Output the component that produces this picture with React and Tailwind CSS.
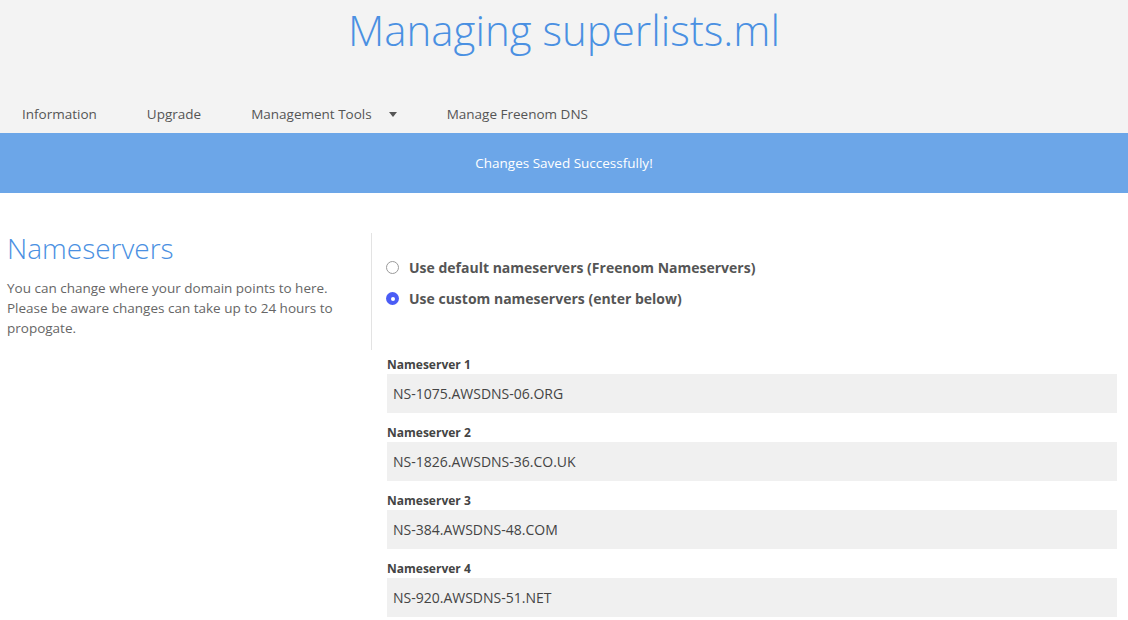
import React from 'react';

const servers = [
  "NS-1075.AWSDNS-06.ORG",
  "NS-1826.AWSDNS-36.CO.UK",
  "NS-384.AWSDNS-48.COM",
  "NS-920.AWSDNS-51.NET",
];

function Radio({ checked, label }) {
  return (
    <label className="flex items-center gap-[10px] h-[31px]">
      {checked ? (
        <span className="w-[13px] h-[13px] rounded-full bg-[#4a5cf5] flex items-center justify-center">
          <span className="w-[4px] h-[4px] rounded-full bg-white" />
        </span>
      ) : (
        <span className="w-[13px] h-[13px] rounded-full border border-[#9a9a9a] bg-white" />
      )}
      <span className="text-[14px] font-bold text-[#555]">{label}</span>
    </label>
  );
}

export default function App() {
  return (
    <div className="w-full min-h-screen bg-white font-['Open_Sans',sans-serif] overflow-hidden">
      {/* Header */}
      <div className="bg-[#f3f3f3]">
        <h1 className="text-center text-[42px] font-light text-[#4a90e2] leading-none pt-[9px] h-[94px]">
          Managing superlists.ml
        </h1>
        <nav className="flex items-center h-[39px] pt-[2px] text-[13.5px] text-[#555] pl-[22px]">
          <span>Information</span>
          <span className="ml-[50px]">Upgrade</span>
          <span className="ml-[50px] flex items-center">
            Management Tools
            <svg width="8" height="5" viewBox="0 0 8 5" className="ml-[17px]">
              <path d="M0 0h8L4 5z" fill="#555" />
            </svg>
          </span>
          <span className="ml-[50px]">Manage Freenom DNS</span>
        </nav>
      </div>

      {/* Banner */}
      <div className="bg-[#6ca6e8] h-[60px] flex items-center justify-center text-white text-[13.5px]">
        Changes Saved Successfully!
      </div>

      {/* Content */}
      <div className="flex pt-[40px]">
        <div className="w-[371px] shrink-0 pl-[7px] pr-[30px]">
          <h2 className="text-[28px] font-light text-[#4a90e2] leading-[34px] -mt-[2px]">Nameservers</h2>
          <p className="text-[13.5px] leading-[20px] text-[#666] mt-[13px]">
            You can change where your domain points to here. Please be aware changes can take up to 24 hours to propogate.
          </p>
        </div>
        <div className="flex-1 pr-[11px]">
          <div className="border-l border-[#e3e3e3] pl-[14px] pt-[19px] h-[117px]">
            <Radio label="Use default nameservers (Freenom Nameservers)" />
            <Radio checked label="Use custom nameservers (enter below)" />
          </div>
          <div className="pl-[16px] pt-[7px]">
            {servers.map((s, i) => (
              <div key={s} className="mb-[12px]">
                <div className="text-[12px] font-bold text-[#444] leading-[16px] mb-[1px]">
                  Nameserver {i + 1}
                </div>
                <div className="bg-[#f0f0f0] h-[39px] flex items-center px-[6px] text-[14px] text-[#444]">
                  {s}
                </div>
              </div>
            ))}
          </div>
        </div>
      </div>
    </div>
  );
}
